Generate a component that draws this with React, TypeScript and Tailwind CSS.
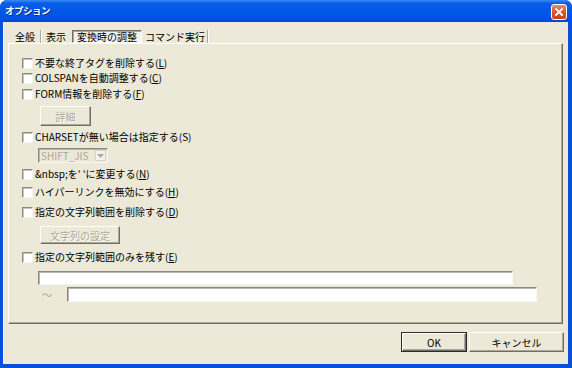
import React from "react";

const raised =
  "border border-t-white border-l-white border-r-[#716f64] border-b-[#716f64] shadow-[inset_-1px_-1px_0_#aca899]";
const sunken =
  "border border-t-[#8a887d] border-l-[#8a887d] border-r-[#f7f6f1] border-b-[#f7f6f1] shadow-[inset_1px_1px_0_#b9b7ab]";

function Check() {
  return (
    <span className="ml-[13px] w-[11px] h-[11px] shrink-0 bg-white border border-t-[#8d8b80] border-l-[#8d8b80] border-r-[#f5f4ef] border-b-[#f5f4ef] shadow-[inset_1px_1px_0_#c9c7bc]" />
  );
}

function Row({ children, className }: { children: React.ReactNode; className: string }) {
  return (
    <div className={`flex items-center h-[14px] ${className}`}>
      <Check />
      <span className="ml-[2px] whitespace-nowrap leading-none text-black">{children}</span>
    </div>
  );
}

function Sep() {
  return <span className="w-[2px] h-full border-l border-l-[#aca899] border-r border-r-white" />;
}

export default function App() {
  return (
    <div className="w-[572px] h-[368px] flex flex-col bg-[#0a4fd9] rounded-t-[7px] overflow-hidden font-['Noto_Sans_CJK_JP',sans-serif] text-[10px]">
      {/* title bar */}
      <div className="h-[22px] shrink-0 flex items-start bg-[linear-gradient(to_bottom,#3d8af7_0%,#0a5fe8_14%,#0058e6_50%,#0052e2_85%,#0046d0_100%)]">
        <span className="ml-[5px] mt-[6px] text-white font-bold text-[9.5px] tracking-[-0.5px] leading-none whitespace-nowrap [text-shadow:1px_1px_0_#0a2e8a]">
          オプション
        </span>
        <span className="ml-auto mr-[5px] mt-[4px] w-[16px] h-[16px] rounded-[3px] border border-white bg-[linear-gradient(to_bottom,#ee8a68_0%,#e0572f_45%,#c8401c_100%)] flex items-center justify-center">
          <svg width="10" height="10" viewBox="0 0 10 10">
            <path d="M2 2 L8 8 M8 2 L2 8" stroke="white" strokeWidth="1.8" strokeLinecap="square" />
          </svg>
        </span>
      </div>

      {/* body */}
      <div className="flex-1 ml-[3px] mr-[4px] mb-[4px] bg-[#ece9d8] flex flex-col border-l border-l-[#f7f5ea]">
        {/* tabs */}
        <div className="flex h-[13px] mt-[8px] ml-[8px] items-stretch text-black leading-[13px] whitespace-nowrap">
          <span className="w-[26px] text-center">全般</span>
          <span className="ml-[2px] flex"><Sep /></span>
          <span className="ml-[2px] w-[24px] text-center">表示</span>
          <span className="ml-[4px] w-[70px] text-center bg-[#f4f3ee] border border-t-[#716f64] border-l-[#716f64] border-r-white border-b-white shadow-[inset_1px_1px_0_#aca899] leading-[11px]">
            変換時の調整
          </span>
          <span className="ml-[1px] w-[64px] text-center">コマンド実行</span>
          <span className="flex"><Sep /></span>
        </div>

        {/* panel */}
        <div className="ml-[4px] w-[555px] h-[281px] shrink-0 flex flex-col border border-t-white border-l-white border-r-[#716f64] border-b-[#716f64] shadow-[inset_-1px_-1px_0_#aca899]">
          <Row className="mt-[12px]">
            不要な終了タグを削除する(<u>L</u>)
          </Row>
          <Row className="mt-[1px]">
            COLSPANを自動調整する(<u>C</u>)
          </Row>
          <Row className="mt-[2px]">
            FORM情報を削除する(<u>F</u>)
          </Row>
          <div className={`ml-[31px] mt-[5px] w-[51px] h-[20px] flex items-center justify-center text-[#aca899] [text-shadow:1px_1px_0_#fff] ${raised}`}>
            詳細
          </div>
          <Row className="mt-[4px]">
            CHARSETが無い場合は指定する(S)
          </Row>
          <div className={`ml-[29px] mt-[4px] w-[70px] h-[15px] flex items-center bg-[#ece9d8] ${sunken}`}>
            <span className="ml-[2px] text-[#aca899] leading-none">SHIFT_JIS</span>
            <span className="ml-auto mr-[1px] w-[11px] h-[11px] flex items-center justify-center bg-[#f3f2ec] border border-[#d8d5c8]">
              <svg width="7" height="4" viewBox="0 0 7 4">
                <path d="M0 0 H7 L3.5 4 Z" fill="#aca899" />
              </svg>
            </span>
          </div>
          <Row className="mt-[4px]">
            &amp;nbsp;を' 'に変更する(<u>N</u>)
          </Row>
          <Row className="mt-[4px]">
            ハイパーリンクを無効にする(<u>H</u>)
          </Row>
          <Row className="mt-[6px]">
            指定の文字列範囲を削除する(<u>D</u>)
          </Row>
          <div className={`ml-[31px] mt-[7px] w-[80px] h-[18px] flex items-center justify-center text-[#aca899] [text-shadow:1px_1px_0_#fff] ${raised}`}>
            文字列の設定
          </div>
          <Row className="mt-[6px]">
            指定の文字列範囲のみを残す(<u>E</u>)
          </Row>
          <div className={`ml-[29px] mt-[7px] w-[475px] h-[14px] bg-white ${sunken}`} />
          <div className="ml-[29px] mt-[2px] flex items-center">
            <span className="ml-[4px] w-[10px] text-[#aca899] leading-none">～</span>
            <div className={`ml-[15px] w-[470px] h-[15px] bg-white ${sunken}`} />
          </div>
        </div>

        {/* buttons */}
        <div className="flex justify-end gap-[2px] mt-[8px] mr-[4px]">
          <div className="w-[66px] h-[20px] border border-[#2b2b2b] flex">
            <div className={`flex-1 flex items-center justify-center text-black ${raised}`}>OK</div>
          </div>
          <div className={`w-[95px] h-[20px] flex items-center justify-center text-black ${raised}`}>
            キャンセル
          </div>
        </div>
      </div>
    </div>
  );
}
